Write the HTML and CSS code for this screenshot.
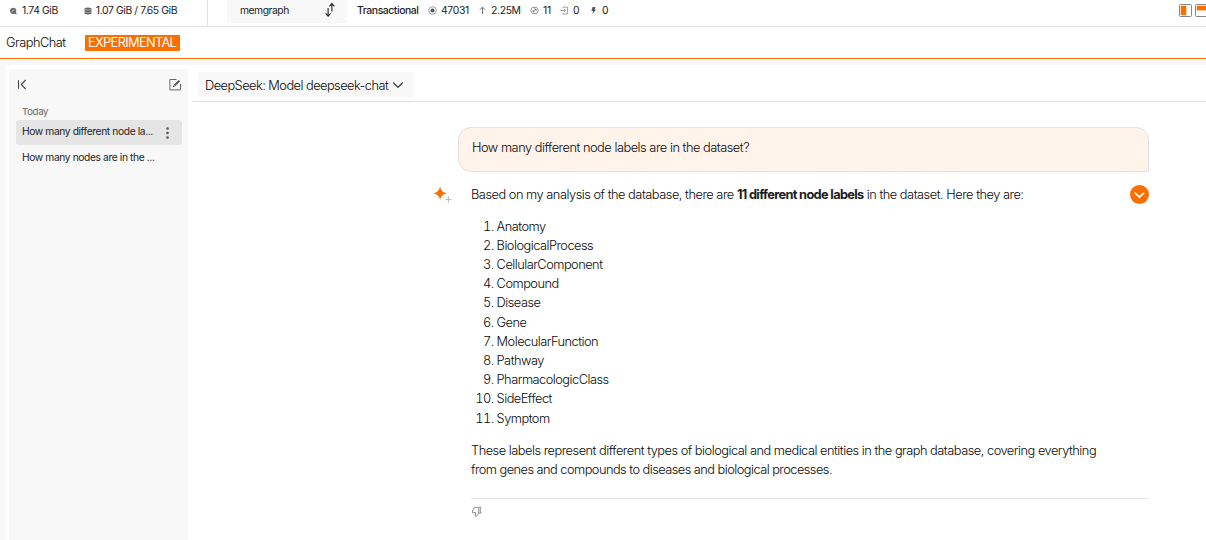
FILE: index.html
```html
<!DOCTYPE html>
<html lang="en">
<head>
<meta charset="utf-8">
<title>GraphChat</title>
<link rel="stylesheet" href="styles.css">
</head>
<body>
<div class="app">
  <header class="topbar">
    <div class="usage">
      <span class="stat disk"><svg width="8" height="8" viewBox="0 0 8 8"><circle cx="4.2" cy="3.8" r="3.1" fill="#707070"/><circle cx="4.2" cy="3.8" r="1.1" fill="#bbb"/><path d="M4.4 4l3 3" stroke="#666" stroke-width="1.4"/></svg><span>1.74 GiB</span></span>
      <span class="stat memory"><svg width="8" height="8" viewBox="0 0 8 8"><path d="M.6 1.2v5.6q3.4 1.4 6.8 0V1.2q-3.4-1.4-6.8 0z" fill="#666"/><path d="M.6 2.4q3.4 1 6.8 0M.6 4.9q3.4 1 6.8 0" fill="none" stroke="#ccc" stroke-width=".6"/></svg><span>1.07 GiB / 7.65 GiB</span></span>
    </div>
    <div class="db-select"><span>memgraph</span><svg width="12" height="16" viewBox="0 0 12 16" fill="none" stroke="#222" stroke-width="1.1"><path d="M7.9 9.5V2M5.4 4.3 7.9 1.6 10.4 4.3M4.1 6v8M1.6 11.4l2.5 2.7 2.5-2.7"/></svg></div>
    <span class="mode">Transactional</span>
    <div class="metrics">
      <span class="metric nodes"><svg width="9" height="9" viewBox="0 0 9 9"><circle cx="4.5" cy="4.5" r="3.8" fill="none" stroke="#888" stroke-width=".8"/><circle cx="4.5" cy="4.5" r="2" fill="#555"/></svg><span>47031</span></span>
      <span class="metric edges"><svg width="9" height="9" viewBox="0 0 9 9" fill="none" stroke="#666" stroke-width=".9"><path d="M4.5 8V1.2M1.8 3.8l2.7-2.7 2.7 2.7"/></svg><span>2.25M</span></span>
      <span class="metric indexes"><svg width="9" height="9" viewBox="0 0 9 9" fill="none" stroke="#777" stroke-width=".8"><path d="M.7 4.5 2.4 1.4h4.2l1.7 3.1-1.7 3.1H2.4z"/><path d="M3.2 5.6 5.8 3.2M3 3.9v2h1.8M6 5V3H4.2"/></svg><span>11</span></span>
      <span class="metric triggers"><svg width="9" height="9" viewBox="0 0 9 9" fill="none" stroke="#888" stroke-width=".8"><path d="M.4 4.5h5M3.8 2.8l1.7 1.7-1.7 1.7M3 2V1.1h4.6v6.8H3V7"/></svg><span>0</span></span>
      <span class="metric streams"><svg width="9" height="9" viewBox="0 0 9 9" fill="#555"><path d="M3.6.9h2.8L5.6 3.5h1.5L3.4 8.2l.8-3.3H2.4z"/></svg><span>0</span></span>
    </div>
    <div class="layouts">
      <svg width="13" height="13" viewBox="0 0 13 13"><rect x=".5" y=".5" width="12" height="12" rx="1" fill="#fff" stroke="#888"/><rect x="1.5" y="1.7" width="6" height="9.6" fill="#ffb680"/><rect x="2" y="2" width="5" height="9" fill="#fb6e00"/></svg>
      <svg width="13" height="13" viewBox="0 0 13 13"><rect x=".5" y=".5" width="12" height="12" rx="1" fill="#fff" stroke="#888"/><rect x="1.5" y="1.5" width="10" height="5.3" fill="#ffb680"/><rect x="2" y="2" width="9" height="4" fill="#fb6e00"/></svg>
    </div>
  </header>

  <div class="titlebar"><span class="title">GraphChat</span><span class="tag">EXPERIMENTAL</span></div>

  <div class="workspace">
    <div class="panel">
      <aside class="sidebar">
        <div class="tools">
          <svg width="11" height="11" viewBox="0 0 11 11" fill="none" stroke="#444" stroke-width="1.1"><path d="M1.5 1.2v8.6M8.6 1 4.3 5.5l4.3 4.5"/></svg>
          <svg width="12" height="12" viewBox="0 0 12 12" fill="none" stroke="#666"><path d="M7.4.5H.9v10.4h10.6V5"/><path d="M5.5 6.5 10.4 1.6" stroke="#555" stroke-width="1.9"/><path d="M3.8 8.2l.7-2.2 1.5 1.5z" fill="#555" stroke="none"/></svg>
        </div>
        <div class="group">Today</div>
        <div class="chat active"><span>How many different node la...</span><svg width="3" height="12" viewBox="0 0 3 12" fill="#555"><circle cx="1.5" cy="1.5" r="1.3"/><circle cx="1.5" cy="6" r="1.3"/><circle cx="1.5" cy="10.5" r="1.3"/></svg></div>
        <div class="chat"><span>How many nodes are in the ...</span></div>
      </aside>
      <main class="main">
        <div class="modelbar"><div class="model"><span>DeepSeek: Model deepseek-chat</span><svg width="12" height="8" viewBox="0 0 12 8" fill="none" stroke="#444" stroke-width="1.3"><path d="M1.2 1.5 6 6.3l4.8-4.8"/></svg></div></div>
        <div class="thread">
          <div class="question">How many different node labels are in the dataset?</div>
          <div class="reply">
            <svg class="spark" width="20" height="18" viewBox="0 0 20 18"><path d="M7.1.2Q8 6.4 14 7.3 8 8.3 7.1 14.2 6.2 8.3.2 7.3 6.2 6.4 7.1.2z" fill="#fb6e00"/><path d="M15.4 10.6v5.8M12.5 13.5h5.8" stroke="#bbb" stroke-width="1.1"/></svg>
            <div class="answer">
              <div class="lead"><p>Based on my analysis of the database, there are <strong>11 different node labels</strong> in the dataset. Here they are:</p>
              <svg class="collapse" width="19" height="19" viewBox="0 0 19 19"><circle cx="9.5" cy="9.5" r="9.5" fill="#fb6e00"/><path d="M4.8 7.7 9.5 12.2 14.2 7.7" fill="none" stroke="#fff" stroke-width="1.6"/></svg></div>
              <ol class="labels">
                <li>Anatomy</li><li>BiologicalProcess</li><li>CellularComponent</li><li>Compound</li><li>Disease</li><li>Gene</li><li>MolecularFunction</li><li>Pathway</li><li>PharmacologicClass</li><li>SideEffect</li><li>Symptom</li>
              </ol>
              <p class="closing">These labels represent different types of biological and medical entities in the graph database, covering everything<br><span class="closing-end">from genes and compounds to diseases and biological processes.</span></p>
              <div class="feedback"><svg width="12" height="12" viewBox="0 0 12 12" fill="none" stroke="#888" stroke-width=".9"><path d="M7.8 1.3H3.4L1.5 5v1.6h3.2L4.2 10l1.2.5L7.8 7zM7.8 1.3h2.6M9.3 1.3V7M7.8 7h2.8"/></svg></div>
            </div>
          </div>
        </div>
      </main>
    </div>
  </div>
</div>
</body>
</html>
```

FILE: styles.css
```css
* { box-sizing: border-box; }
body { margin: 0; font-family: Inter, "Liberation Sans", sans-serif; font-size: 12.8px; line-height: 19.2px; font-weight: 300; color: #0a0a0a; letter-spacing: -0.49px; background: #fff; overflow: hidden; }
svg { display: block; flex: none; }
p { margin: 0; }
.app { height: 540px; display: flex; flex-direction: column; white-space: nowrap; }
.topbar { height: 27px; flex: none; display: flex; border-bottom: 1px solid #e2e2e2; font-size: 10.4px; font-weight: 400; line-height: 21px; letter-spacing: -0.4px; color: #1d1d1d; overflow: hidden; }
.usage { width: 208px; padding-left: 9px; display: flex; gap: 26px; border-right: 1px solid #e2e2e2; flex: none; }
.stat { display: flex; gap: 5px; }
.stat svg { margin-top: 7px; }
.memory { gap: 4px; }
.db-select { margin-left: 19px; width: 120px; height: 23px; padding: 0 11px 0 13px; background: #f8f8f8; display: flex; justify-content: space-between; flex: none; font-size: 10.3px; letter-spacing: -0.45px; }
.db-select svg { margin-top: 2px; }
.mode { margin-left: 10px; width: 71px; flex: none; font-weight: 500; letter-spacing: -0.42px; }
.metrics { display: flex; flex: 1; letter-spacing: -0.34px; }
.metric { display: flex; gap: 4px; flex: none; }
.metric svg { margin-top: 6px; }
.nodes { width: 50px; }
.edges { width: 52px; }
.indexes { width: 30px; }
.triggers { width: 29px; }
.layouts { display: flex; gap: 3px; width: 27px; padding-top: 4px; flex: none; }
.titlebar { height: 32px; flex: none; display: flex; align-items: center; padding-left: 6px; border-bottom: 1px solid #fb6e00; }
.title { width: 79px; }
.tag { width: 95px; height: 16px; line-height: 16px; padding-left: 3px; background: #fb6e00; color: #fff; border-radius: 1px; font-weight: 400; letter-spacing: -0.66px; }
.workspace { flex: 1; min-height: 0; background: #f8f8f8; padding: 6px 0 0 6px; }
.panel { height: 100%; background: #fff; border-top-left-radius: 3px; padding: 4px 0 0 3px; display: flex; }
.sidebar { width: 179px; flex: none; background: #f8f8f8; padding: 10px 6px 0 7px; font-size: 10.24px; line-height: 16px; letter-spacing: -0.38px; font-weight: 400; color: #1d1d1d; border-top-left-radius: 2px; }
.tools { display: flex; justify-content: space-between; padding: 0 1px; }
.group { margin-top: 13px; height: 16px; padding-left: 6px; font-size: 9.6px; letter-spacing: -0.3px; color: #666; }
.chat { height: 25px; padding: 0 13px 0 6px; display: flex; align-items: center; justify-content: space-between; border-radius: 3px; margin-bottom: 1px; }
.chat span { padding-bottom: 3px; }
.active { background: #e5e5e5; }
.main { flex: 1; margin-left: 4px; }
.modelbar { height: 33px; padding: 3px 0 0 6px; border-bottom: 1px solid #e2e2e2; }
.model { width: 216px; height: 25px; background: #f8f8f8; border-radius: 3px; padding: 1px 10px 0 7px; display: flex; align-items: center; justify-content: space-between; letter-spacing: -0.53px; }
.model span { padding-top: 1px; }
.thread { width: 957px; padding: 25px 0 0 241px; }
.question { margin-left: 25px; height: 45px; padding: 10px 13px; border: 1px solid #e2e2e2; border-radius: 13px 13px 0 13px; background: #fff3ea; letter-spacing: -0.48px; }
.reply { display: flex; padding-top: 13px; }
.spark { width: 20px; margin-right: 18px; margin-top: 1px; }
.answer { flex: 1; }
.lead { display: flex; justify-content: space-between; letter-spacing: -0.48px; }
.lead strong { font-weight: 700; letter-spacing: -0.66px; color: #1d1d1d; }
.labels { margin: 12.4px 0 13.2px; padding-left: 25.6px; letter-spacing: -0.51px; }
.closing { height: 57px; }
.closing-end { letter-spacing: -0.53px; }
.feedback { border-top: 1px solid #e2e2e2; padding-top: 7px; }
```
